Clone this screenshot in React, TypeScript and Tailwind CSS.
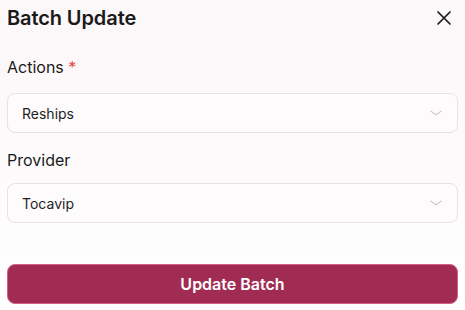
import React from "react";

function Chevron() {
  return (
    <svg width="18" height="18" viewBox="0 0 24 24" fill="none" stroke="#c4c4c4" strokeWidth="1.4" strokeLinecap="round" strokeLinejoin="round">
      <path d="M5 9.5l7 5 7-5" />
    </svg>
  );
}

function Select({ value }: { value: string }) {
  return (
    <div className="h-[40px] rounded-[8px] border border-[#e4e2e3] bg-[#fdfbfb] flex items-center justify-between pl-[14px] pr-[12px]">
      <span className="text-[14px] text-[#1f1f1f]">{value}</span>
      <Chevron />
    </div>
  );
}

export default function App() {
  return (
    <div
      className="w-[465px] h-[310px] bg-gradient-to-b from-[#fcf7f8] via-[#fdfafb] to-white px-[7px] flex flex-col"
      style={{ fontFamily: "Inter, 'Noto Sans', sans-serif" }}
    >
      <div className="flex items-center justify-between h-[36px]">
        <h1 className="text-[20px] font-semibold text-[#1a1a1a] tracking-[-0.1px]">Batch Update</h1>
        <svg width="16" height="16" viewBox="0 0 16 16" className="mr-[6px]" fill="none" stroke="#1a1a1a" strokeWidth="1.7" strokeLinecap="round">
          <path d="M2 2l12 12M14 2L2 14" />
        </svg>
      </div>
      <div className="mt-[19px] flex flex-col">
        <div className="text-[16px] font-normal text-[#1a1a1a] h-[24px] leading-[24px]">
          Actions <span className="text-[#ef4444]">*</span>
        </div>
        <div className="mt-[14px]">
          <Select value="Reships" />
        </div>
      </div>
      <div className="mt-[15px] flex flex-col">
        <div className="text-[16px] font-normal text-[#1a1a1a] h-[24px] leading-[24px]">Provider</div>
        <div className="mt-[11px]">
          <Select value="Tocavip" />
        </div>
      </div>
      <button className="mt-[41px] h-[40px] w-full rounded-[8px] bg-[#a02c53] border-[1.5px] border-[#d45c86] text-white text-[16px] font-semibold flex items-center justify-center">
        Update Batch
      </button>
    </div>
  );
}
